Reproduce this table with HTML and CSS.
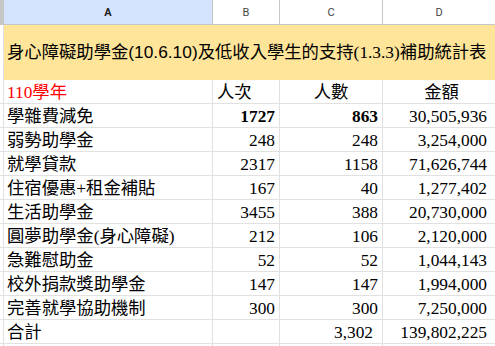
FILE: index.html
```html
<!DOCTYPE html>
<html lang="zh-Hant">
<head>
<meta charset="utf-8">
<title>補助統計表</title>
<link rel="stylesheet" href="styles.css">
</head>
<body>
<div class="sheet">
  <div class="row head">
    <div class="corner"></div>
    <div class="ch sel">A</div>
    <div class="ch">B</div>
    <div class="ch">C</div>
    <div class="ch last">D</div>
  </div>
  <div class="row title-row">
    <div class="rh"></div>
    <div class="title">身心障礙助學金<span class="sans">(10.6.10)</span>及低收入學生的支持(1.3.3)補助統計表</div>
  </div>
  <div class="row">
    <div class="rh"></div>
    <div class="c red">110學年</div>
    <div class="c lab-b">人次</div>
    <div class="c mid">人數</div>
    <div class="c mid d-head">金額</div>
  </div>
  <div class="row">
    <div class="rh"></div>
    <div class="c">學雜費減免</div>
    <div class="c num bold">1727</div>
    <div class="c num bold">863</div>
    <div class="c num d">30,505,936</div>
  </div>
  <div class="row">
    <div class="rh"></div>
    <div class="c">弱勢助學金</div>
    <div class="c num">248</div>
    <div class="c num">248</div>
    <div class="c num d">3,254,000</div>
  </div>
  <div class="row">
    <div class="rh"></div>
    <div class="c">就學貸款</div>
    <div class="c num">2317</div>
    <div class="c num">1158</div>
    <div class="c num d">71,626,744</div>
  </div>
  <div class="row">
    <div class="rh"></div>
    <div class="c">住宿優惠+租金補貼</div>
    <div class="c num">167</div>
    <div class="c num">40</div>
    <div class="c num d">1,277,402</div>
  </div>
  <div class="row">
    <div class="rh"></div>
    <div class="c">生活助學金</div>
    <div class="c num">3455</div>
    <div class="c num">388</div>
    <div class="c num d">20,730,000</div>
  </div>
  <div class="row">
    <div class="rh"></div>
    <div class="c">圓夢助學金(身心障礙)</div>
    <div class="c num">212</div>
    <div class="c num">106</div>
    <div class="c num d">2,120,000</div>
  </div>
  <div class="row">
    <div class="rh"></div>
    <div class="c">急難慰助金</div>
    <div class="c num">52</div>
    <div class="c num">52</div>
    <div class="c num d">1,044,143</div>
  </div>
  <div class="row">
    <div class="rh"></div>
    <div class="c">校外捐款獎助學金</div>
    <div class="c num">147</div>
    <div class="c num">147</div>
    <div class="c num d">1,994,000</div>
  </div>
  <div class="row">
    <div class="rh"></div>
    <div class="c">完善就學協助機制</div>
    <div class="c num">300</div>
    <div class="c num">300</div>
    <div class="c num d">7,250,000</div>
  </div>
  <div class="row">
    <div class="rh"></div>
    <div class="c">合計</div>
    <div class="c num"></div>
    <div class="c num acct">3,302</div>
    <div class="c num d acct-d">139,802,225</div>
  </div>
  <div class="row tail">
    <div class="rh"></div>
    <div class="c"></div>
    <div class="c"></div>
    <div class="c"></div>
    <div class="c"></div>
  </div>
</div>
</body>
</html>
```
FILE: styles.css
```css
* { box-sizing: border-box; }
html, body { margin: 0; padding: 0; background: #ffffff; overflow: hidden; }
body { width: 495px; height: 346px; }

.sheet {
  width: 495px;
  font-family: "Liberation Serif", "Noto Sans CJK TC", serif;
  font-size: 17.33px;
  color: #000000;
}

.row {
  display: grid;
  grid-template-columns: 4px 209px 67px 103px 112px;
  height: 24px;
}
.row.tail { height: 2px; }
.row.tail .rh, .row.tail .c { border-bottom: none; padding: 0; }

.head { height: 25px; }
.corner {
  background: #c4c7c5;
  border-bottom: 1px solid #c4c7c5;
}
.ch {
  display: flex;
  align-items: center;
  justify-content: center;
  font-family: Roboto, "Liberation Sans", sans-serif;
  font-size: 11px;
  color: #444746;
  background: #ffffff;
  border-right: 1px solid #c4c7c5;
  border-bottom: 1px solid #c4c7c5;
  padding-top: 1px;
}
.ch.sel {
  background: #d3e3fd;
  color: #1f1f1f;
  font-weight: bold;
}
.ch.last { border-right: none; }

.title-row { height: 55px; }
.rh {
  border-right: 1px solid #e1e1e1;
  border-bottom: 1px solid #e1e1e1;
  background: #ffffff;
}
.title-row .rh { border-bottom: none; }
.title {
  grid-column: 2 / 6;
  background: #ffe599;
  display: flex;
  align-items: center;
  padding-left: 3px;
  white-space: nowrap;
  font-family: "Liberation Serif", "Noto Sans CJK TC", serif;
  font-size: 17.33px;
  line-height: 1;
}
.sans { font-family: "Liberation Sans", "Noto Sans CJK TC", sans-serif; }

.c {
  display: flex;
  align-items: flex-end;
  padding: 0 3px 2px 3px;
  white-space: nowrap;
  line-height: 1;
  border-right: 1px solid #e1e1e1;
  border-bottom: 1px solid #e1e1e1;
}
.c:last-child { border-right: none; }
.red { color: #ff0000; }
.lab-b { padding-left: 4px; }
.mid { justify-content: center; }
.d-head { padding-left: 8px; }
.num { justify-content: flex-end; padding-right: 4px; }
.num.d { padding-right: 8px; }
.bold { font-weight: bold; }
.acct { padding-right: 9px; }
.acct-d { padding-right: 9px; }
```
